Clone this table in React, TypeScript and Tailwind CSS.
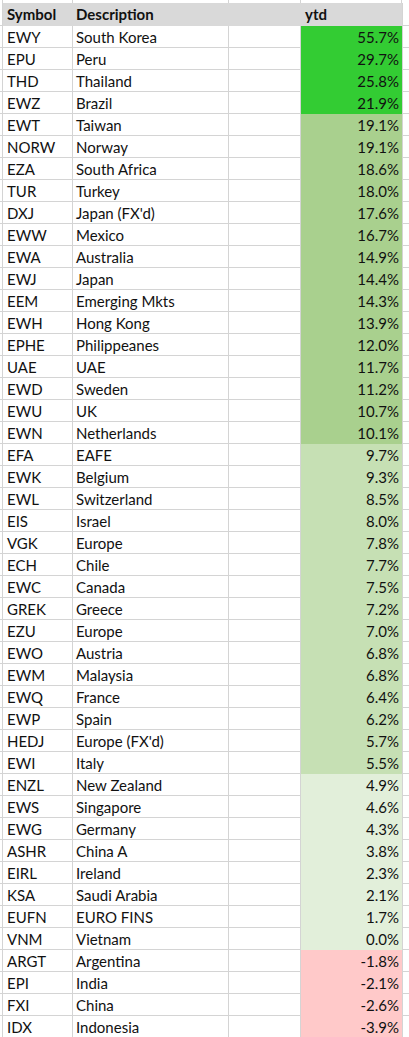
const rows: [string, string, string, string][] = [
  ["EWY", "South Korea", "55.7%", "bg-[#33cc33]"],
  ["EPU", "Peru", "29.7%", "bg-[#33cc33]"],
  ["THD", "Thailand", "25.8%", "bg-[#33cc33]"],
  ["EWZ", "Brazil", "21.9%", "bg-[#33cc33]"],
  ["EWT", "Taiwan", "19.1%", "bg-[#a9d08e]"],
  ["NORW", "Norway", "19.1%", "bg-[#a9d08e]"],
  ["EZA", "South Africa", "18.6%", "bg-[#a9d08e]"],
  ["TUR", "Turkey", "18.0%", "bg-[#a9d08e]"],
  ["DXJ", "Japan (FX'd)", "17.6%", "bg-[#a9d08e]"],
  ["EWW", "Mexico", "16.7%", "bg-[#a9d08e]"],
  ["EWA", "Australia", "14.9%", "bg-[#a9d08e]"],
  ["EWJ", "Japan", "14.4%", "bg-[#a9d08e]"],
  ["EEM", "Emerging Mkts", "14.3%", "bg-[#a9d08e]"],
  ["EWH", "Hong Kong", "13.9%", "bg-[#a9d08e]"],
  ["EPHE", "Philippeanes", "12.0%", "bg-[#a9d08e]"],
  ["UAE", "UAE", "11.7%", "bg-[#a9d08e]"],
  ["EWD", "Sweden", "11.2%", "bg-[#a9d08e]"],
  ["EWU", "UK", "10.7%", "bg-[#a9d08e]"],
  ["EWN", "Netherlands", "10.1%", "bg-[#a9d08e]"],
  ["EFA", "EAFE", "9.7%", "bg-[#c6e0b4]"],
  ["EWK", "Belgium", "9.3%", "bg-[#c6e0b4]"],
  ["EWL", "Switzerland", "8.5%", "bg-[#c6e0b4]"],
  ["EIS", "Israel", "8.0%", "bg-[#c6e0b4]"],
  ["VGK", "Europe", "7.8%", "bg-[#c6e0b4]"],
  ["ECH", "Chile", "7.7%", "bg-[#c6e0b4]"],
  ["EWC", "Canada", "7.5%", "bg-[#c6e0b4]"],
  ["GREK", "Greece", "7.2%", "bg-[#c6e0b4]"],
  ["EZU", "Europe", "7.0%", "bg-[#c6e0b4]"],
  ["EWO", "Austria", "6.8%", "bg-[#c6e0b4]"],
  ["EWM", "Malaysia", "6.8%", "bg-[#c6e0b4]"],
  ["EWQ", "France", "6.4%", "bg-[#c6e0b4]"],
  ["EWP", "Spain", "6.2%", "bg-[#c6e0b4]"],
  ["HEDJ", "Europe (FX'd)", "5.7%", "bg-[#c6e0b4]"],
  ["EWI", "Italy", "5.5%", "bg-[#c6e0b4]"],
  ["ENZL", "New Zealand", "4.9%", "bg-[#e2efda]"],
  ["EWS", "Singapore", "4.6%", "bg-[#e2efda]"],
  ["EWG", "Germany", "4.3%", "bg-[#e2efda]"],
  ["ASHR", "China A", "3.8%", "bg-[#e2efda]"],
  ["EIRL", "Ireland", "2.3%", "bg-[#e2efda]"],
  ["KSA", "Saudi Arabia", "2.1%", "bg-[#e2efda]"],
  ["EUFN", "EURO FINS", "1.7%", "bg-[#e2efda]"],
  ["VNM", "Vietnam", "0.0%", "bg-[#e2efda]"],
  ["ARGT", "Argentina", "-1.8%", "bg-[#ffc9c9]"],
  ["EPI", "India", "-2.1%", "bg-[#ffc9c9]"],
  ["FXI", "China", "-2.6%", "bg-[#ffc9c9]"],
  ["IDX", "Indonesia", "-3.9%", "bg-[#ffc9c9]"],
];

export default function App() {
  return (
    <div className="w-[409px] h-[1037px] overflow-hidden bg-white text-[15px] text-[#111] font-['Lato','Liberation_Sans',sans-serif]">
      {/* strip of the row above */}
      <div className="flex h-[3px]">
        <div className="w-[3px] border-r border-[#d4d4d4]" />
        <div className="w-[70px] border-r border-[#d4d4d4]" />
        <div className="w-[156px] border-r border-[#d4d4d4]" />
        <div className="w-[72px] border-r border-[#d4d4d4]" />
        <div className="w-[101px] border-r border-[#d4d4d4]" />
        <div className="flex-1" />
      </div>
      {/* header */}
      <div className="flex h-[23px] font-bold leading-[22px]">
        <div className="w-[3px] border-r border-b border-[#d4d4d4]" />
        <div className="w-[70px] bg-[#d9d9d9] pl-[4px]">Symbol</div>
        <div className="w-[156px] bg-[#d9d9d9] pl-[3px]">Description</div>
        <div className="w-[72px] bg-[#d9d9d9]" />
        <div className="w-[101px] bg-[#d9d9d9] pl-[4px]">ytd</div>
        <div className="flex-1 border-l border-b border-[#d4d4d4]" />
      </div>
      {rows.map(([sym, desc, ytd, color]) => (
        <div key={sym + desc} className="flex h-[22px] leading-[22px]">
          <div className="w-[3px] border-r border-b border-[#d4d4d4]" />
          <div className="w-[70px] pl-[4px] border-r border-b border-[#d4d4d4]">{sym}</div>
          <div className="w-[156px] pl-[3px] border-r border-b border-[#d4d4d4]">{desc}</div>
          <div className="w-[72px] border-r border-b border-[#d4d4d4]" />
          <div className={`w-[101px] pr-[3px] text-right ${color}`}>{ytd}</div>
          <div className="flex-1 border-l border-b border-[#d4d4d4]" />
        </div>
      ))}
    </div>
  );
}
